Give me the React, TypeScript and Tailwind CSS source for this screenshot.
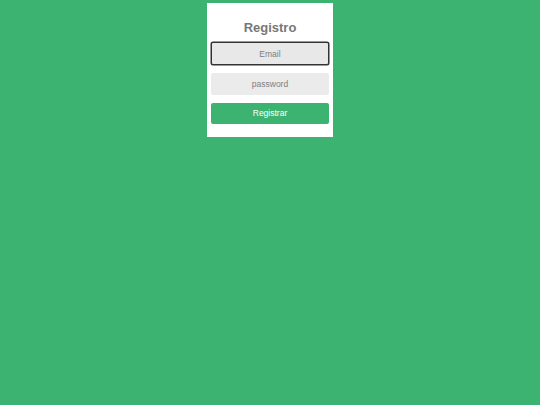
import React from 'react';

const App: React.FC = () => {
  return (
    <div className="min-h-screen w-full bg-[#3cb371] flex justify-center items-start pt-[3px]" style={{ fontFamily: '"Liberation Sans", Arial, sans-serif' }}>
      <form className="w-[126px] bg-white px-[4px] pt-[17px] pb-[13px] flex flex-col" onSubmit={(e) => e.preventDefault()}>
        <h2 className="text-center text-[13px] font-bold text-[#777] leading-[16px] mb-[6px]">Registro</h2>
        <input
          autoFocus
          type="email"
          placeholder="Email"
          className="h-[23px] w-full rounded-[2px] bg-[#e8e8e8] text-center text-[8.5px] text-[#555] placeholder:text-[#808080] border border-[#e8e8e8] focus:border-[#333] focus:outline-none focus:shadow-[0_0_0_0.5px_#333]"
        />
        <input
          type="password"
          placeholder="password"
          className="mt-[8px] h-[22px] w-full rounded-[2px] bg-[#ebebeb] text-center text-[8.5px] text-[#555] placeholder:text-[#808080] outline-none"
        />
        <button type="submit" className="mt-[8px] h-[21px] w-full rounded-[2px] bg-[#3cb371] text-white text-[8.5px]">
          Registrar
        </button>
      </form>
    </div>
  );
};

export default App;
